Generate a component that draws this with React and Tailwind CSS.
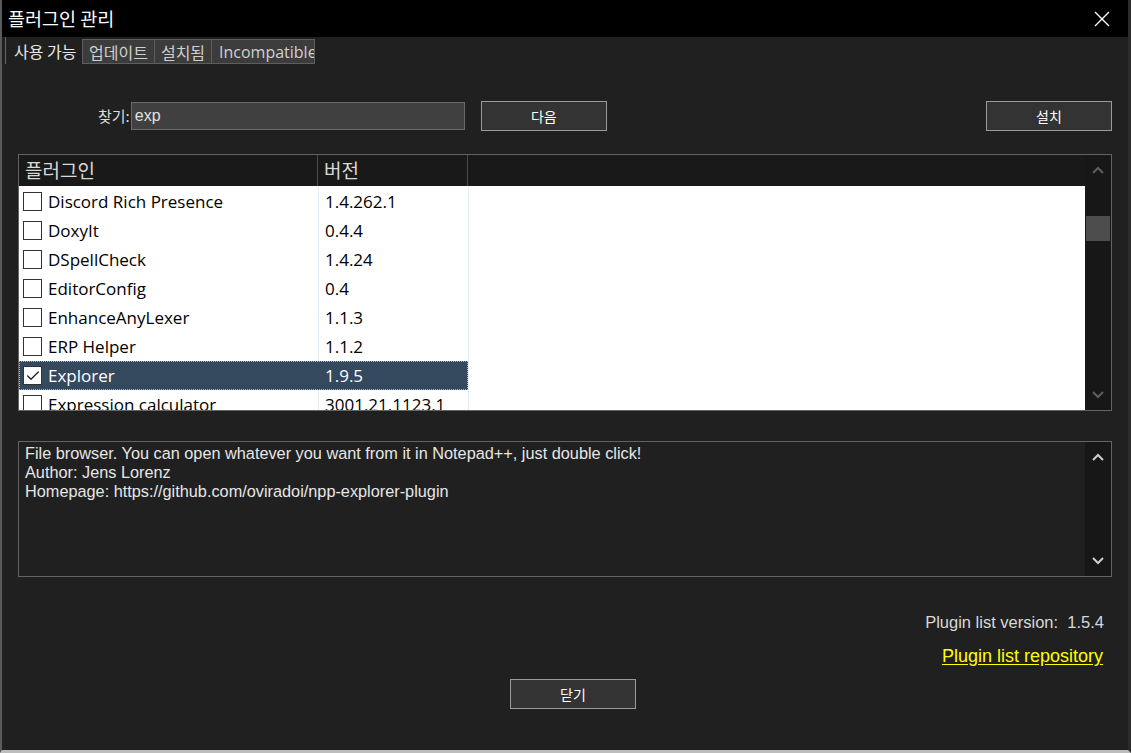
import { Check } from "lucide-react";

const KR = { fontFamily: '"Noto Sans CJK KR", "Noto Sans", sans-serif' };
const UI = { fontFamily: '"Liberation Sans", "Noto Sans CJK KR", sans-serif' };
const ROW = { fontFamily: '"Open Sans", "Liberation Sans", sans-serif' };

const plugins = [
  { name: "Discord Rich Presence", ver: "1.4.262.1" },
  { name: "DoxyIt", ver: "0.4.4" },
  { name: "DSpellCheck", ver: "1.4.24" },
  { name: "EditorConfig", ver: "0.4" },
  { name: "EnhanceAnyLexer", ver: "1.1.3" },
  { name: "ERP Helper", ver: "1.1.2" },
  { name: "Explorer", ver: "1.9.5", selected: true },
  { name: "Expression calculator", ver: "3001.21.1123.1" },
];

function Chevron({ up, color }) {
  return (
    <svg width="12" height="8" viewBox="0 0 12 8">
      <path
        d={up ? "M1 7 L6 2 L11 7" : "M1 1 L6 6 L11 1"}
        fill="none"
        stroke={color}
        strokeWidth="2"
      />
    </svg>
  );
}

function Button({ children, className = "" }) {
  return (
    <div
      className={`w-[126px] h-[30px] bg-[#333333] border border-[#9b9b9b] flex items-center justify-center text-[14px] text-white ${className}`}
      style={KR}
    >
      {children}
    </div>
  );
}

function Row({ p }) {
  return (
    <div className="h-[29px] flex items-center shrink-0" style={ROW}>
      <div
        className={`w-[449px] h-full flex items-center ${
          p.selected ? "bg-[#34495e] outline outline-1 outline-dotted outline-[#a8b4c0] -outline-offset-1" : ""
        }`}
      >
        <div className="w-[299px] flex items-center pl-[4px] h-full">
          <div className="w-[19px] h-[19px] bg-white border border-[#333333] flex items-center justify-center shrink-0">
            {p.selected && <Check size={16} strokeWidth={2} className="text-[#222]" />}
          </div>
          <span className={`ml-[6px] text-[17px] whitespace-nowrap ${p.selected ? "text-white" : "text-black"}`}>{p.name}</span>
        </div>
        <div className={`w-[150px] h-full flex items-center pl-[6px] border-l whitespace-nowrap ${p.selected ? "border-transparent text-white" : "border-[#e3ecf7] text-black"} text-[17px]`}>
          {p.ver}
        </div>
      </div>
      <div className="h-full border-l border-[#e3ecf7]" />
    </div>
  );
}

export default function App() {
  return (
    <div className="w-[1131px] h-[753px] bg-[#202020] flex flex-col overflow-hidden border-l-2 border-r-[3px] border-b-[3px] border-l-[#5a5a5a] border-r-[#2c2c2c] border-b-[#bdbdbd]" style={UI}>
      {/* 제목 표시줄 */}
      <div className="h-[37px] bg-black flex items-center justify-between pl-[6px] pr-[18px] shrink-0">
        <span className="text-white text-[18.5px]" style={KR}>플러그인 관리</span>
        <svg width="16" height="16" viewBox="0 0 16 16">
          <path d="M1 1 L15 15 M15 1 L1 15" stroke="#ffffff" strokeWidth="1.4" />
        </svg>
      </div>

      {/* 탭 */}
      <div className="flex items-start h-[29px] pl-[3px] shrink-0" style={KR}>
        <div className="h-[27px] w-[77px] flex items-center pl-[8px] border-l border-[#6a6a6a] text-[16px] text-[#e8e8e8] whitespace-nowrap">사용 가능</div>
        <div className="h-[25px] mt-[2px] w-[73px] flex items-center justify-center bg-[#3c3c3c] border border-[#5e5e5e] text-[16px] text-[#d0d0d0]">업데이트</div>
        <div className="h-[25px] mt-[2px] w-[57px] flex items-center justify-center bg-[#3c3c3c] border border-l-0 border-[#5e5e5e] text-[16px] text-[#d0d0d0]">설치됨</div>
        <div className="h-[25px] mt-[2px] w-[103px] flex items-center pl-[7px] overflow-hidden whitespace-nowrap bg-[#3c3c3c] border border-l-0 border-[#5e5e5e] text-[16px] text-[#d0d0d0]" style={ROW}>Incompatible</div>
      </div>

      <div className="flex flex-col px-[16px] flex-1">
        {/* 검색 줄 */}
        <div className="mt-[35px] h-[30px] flex items-center">
          <span className="ml-[80px] text-[15px] text-[#dcdcdc]" style={KR}>찾기:</span>
          <div className="ml-[1px] w-[334px] h-[28px] bg-[#404040] border border-[#6a6a6a] flex items-center pl-[3px] text-[16px] text-[#e0e0e0]">exp</div>
          <Button className="ml-[16px]">다음</Button>
          <div className="flex-1" />
          <Button>설치</Button>
        </div>

        {/* 목록 */}
        <div className="mt-[23px] h-[257px] border border-[#646464] flex">
          <div className="flex-1 flex flex-col min-w-0">
            <div className="h-[31px] bg-[#191919] flex shrink-0 text-[19px] text-[#d8d8d8]" style={KR}>
              <div className="w-[299px] pl-[6px] flex items-center border-r border-[#4a4a4a]">플러그인</div>
              <div className="w-[150px] pl-[6px] flex items-center border-r border-[#4a4a4a]">버전</div>
            </div>
            <div className="flex-1 bg-white flex flex-col overflow-hidden pt-[1px]">
              {plugins.map((p) => (
                <Row key={p.name} p={p} />
              ))}
            </div>
          </div>
          <div className="w-[26px] bg-[#171717] flex flex-col items-center">
            <div className="h-[30px] flex items-center justify-center">
              <Chevron up color="#5f5f5f" />
            </div>
            <div className="mt-[31px] w-[24px] h-[25px] bg-[#4d4d4d]" />
            <div className="flex-1" />
            <div className="h-[30px] flex items-center justify-center">
              <Chevron color="#5f5f5f" />
            </div>
          </div>
        </div>

        {/* 설명 */}
        <div className="mt-[30px] h-[136px] border border-[#646464] flex">
          <div className="flex-1 pl-[6px] pt-[2px] text-[16.3px] leading-[19px] text-[#e6e6e6] whitespace-nowrap">
            <div>File browser. You can open whatever you want from it in Notepad++, just double click!</div>
            <div>Author: Jens Lorenz</div>
            <div>Homepage: https://github.com/oviradoi/npp-explorer-plugin</div>
          </div>
          <div className="w-[26px] bg-[#171717] flex flex-col items-center justify-between py-[11px]">
            <Chevron up color="#cfcfcf" />
            <Chevron color="#cfcfcf" />
          </div>
        </div>

        {/* 하단 */}
        <div className="mt-[35px] flex flex-col items-end pr-[8px]">
          <div className="text-[16.5px] text-[#d8d8d8] h-[20px] leading-[20px]">
            Plugin list version:&nbsp;&nbsp;1.5.4
          </div>
          <div className="mt-[14px] text-[18px] text-[#ffff00] underline underline-offset-2 h-[20px] leading-[20px] mr-[1px]">
            Plugin list repository
          </div>
        </div>
        <div className="mt-[13px] flex justify-center pl-[16px]">
          <Button>닫기</Button>
        </div>
      </div>
    </div>
  );
}
